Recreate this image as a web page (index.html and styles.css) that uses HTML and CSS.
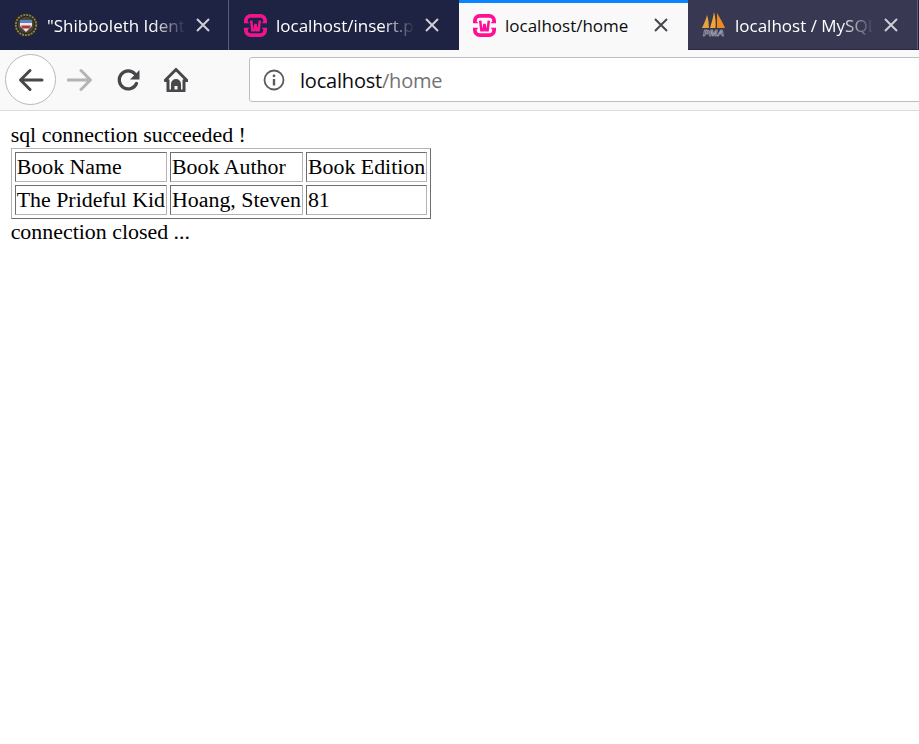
FILE: index.html
```html
<!DOCTYPE html>
<html lang="en">
<head>
<meta charset="utf-8">
<title>localhost/home</title>
<link rel="stylesheet" href="styles.css">
</head>
<body>
<div class="browser">
  <div class="tabs">
    <div class="tab tab-first">
      <svg class="favicon" viewBox="0 0 24 24"><circle cx="12" cy="12" r="12" fill="#2b2a20"/><circle cx="12" cy="12" r="10.200" fill="none" stroke="#8d8455" stroke-width="1.800" stroke-dasharray="2 1"/><circle cx="12" cy="12" r="8" fill="#4a473a"/><path d="M6 7h12v6l-6 6-6-6z" fill="#ece8e4"/><path d="M6 7h12v3H6z" fill="#5a86c0"/><path d="M7 12.500h10l-1.500 3h-7z" fill="#b8323c"/></svg>
      <span class="tab-title">"Shibboleth Identi</span>
      <svg class="close" viewBox="0 0 16 16"><path d="M2 2l12 12M14 2L2 14"/></svg>
    </div>
    <div class="tab tab-second">
      <svg class="favicon favicon-wamp" viewBox="0 0 24 24"><path d="M2 8.500V7a5 5 0 0 1 5-5h10a5 5 0 0 1 5 5v1.500M2 15.500V17a5 5 0 0 0 5 5h10a5 5 0 0 0 5-5v-1.500" fill="none" stroke="#f2148f" stroke-width="4"/><path d="M0 9h5M19 9h5M0 15h5M19 15h5" stroke="#f2148f" stroke-width="1.500"/><path d="M7.500 7l1.200 10h2L12 10.500l1.300 6.500h2L16.500 7" fill="none" stroke="#f2148f" stroke-width="2.600"/></svg>
      <span class="tab-title">localhost/insert.pl</span>
      <svg class="close" viewBox="0 0 16 16"><path d="M2 2l12 12M14 2L2 14"/></svg>
    </div>
    <div class="tab tab-active">
      <svg class="favicon favicon-wamp" viewBox="0 0 24 24"><path d="M2 8.500V7a5 5 0 0 1 5-5h10a5 5 0 0 1 5 5v1.500M2 15.500V17a5 5 0 0 0 5 5h10a5 5 0 0 0 5-5v-1.500" fill="none" stroke="#ff0f97" stroke-width="4"/><path d="M0 9h5M19 9h5M0 15h5M19 15h5" stroke="#ff0f97" stroke-width="1.500"/><path d="M7.500 7l1.200 10h2L12 10.500l1.300 6.500h2L16.500 7" fill="none" stroke="#ff0f97" stroke-width="2.600"/></svg>
      <span class="tab-title">localhost/home</span>
      <svg class="close" viewBox="0 0 16 16"><path d="M2 2l12 12M14 2L2 14"/></svg>
    </div>
    <div class="tab tab-hover">
      <svg class="favicon favicon-pma" viewBox="0 0 25 26"><path d="M1 16C3 12 5 7 6 3c1.500 4 2 9 1.800 13z" fill="#e5a33f"/><path d="M9 16c1.500-5 3-10 4-16 1.500 5 2 11 1.500 16z" fill="#f2a531"/><path d="M16 1c3 5 6 10 8 15h-8z" fill="#ee8a1c"/><text class="pma-text" x="12.500" y="23.500" text-anchor="middle">PMA</text></svg>
      <span class="tab-title">localhost / MySQL</span>
      <svg class="close" viewBox="0 0 16 16"><path d="M2 2l12 12M14 2L2 14"/></svg>
    </div>
  </div>
  <div class="toolbar">
    <div class="back-btn">
      <svg class="nav-icon" viewBox="0 0 26 26"><path d="M24 13H3M12 3.500L2.500 13l9.500 9.500" fill="none" stroke="#47474b" stroke-width="3" stroke-linecap="round" stroke-linejoin="round"/></svg>
    </div>
    <svg class="nav-icon forward" viewBox="0 0 26 26"><path d="M1 13h22M14 3.500l9.500 9.500-9.500 9.500" fill="none" stroke="#b4b4b6" stroke-width="3" stroke-linecap="round" stroke-linejoin="round"/></svg>
    <svg class="nav-icon reload" viewBox="0 0 24 24"><path d="M19.500 15.500A9 9 0 1 1 18 6" fill="none" stroke="#47474b" stroke-width="3.200" stroke-linecap="round"/><path d="M22.500 2v9.500H13z" fill="#47474b"/></svg>
    <svg class="nav-icon home" viewBox="0 0 24 24"><path d="M12 1.500L1 12.500h3V23h16V12.500h3z" fill="none" stroke="#47474b" stroke-width="3" stroke-linejoin="round"/><path d="M7 23v-7a5 5 0 0 1 10 0v7h-3.500v-5h-3v5z" fill="#47474b"/></svg>
    <div class="address">
      <svg class="info" viewBox="0 0 22 22"><circle cx="11" cy="11" r="9.500" fill="none" stroke="#5b5b5f" stroke-width="1.800"/><circle cx="11" cy="6.800" r="1.400" fill="#5b5b5f"/><path d="M11 10v6.500" stroke="#5b5b5f" stroke-width="2.400"/></svg>
      <span class="url"><span class="host">localhost</span><span class="path">/home</span></span>
    </div>
  </div>
  <main class="content">
    <div class="line">sql connection succeeded !</div>
    <table class="books">
      <tr><td>Book Name</td><td>Book Author</td><td>Book Edition</td></tr>
      <tr><td>The Prideful Kid</td><td>Hoang, Steven</td><td>81</td></tr>
    </table>
    <div class="line">connection closed ...</div>
  </main>
</div>
</body>
</html>
```
FILE: styles.css
```css
html, body {
  margin: 0;
  padding: 0;
  background: #fff;
}
.browser {
  width: 919px;
  height: 744px;
  overflow: hidden;
  display: flex;
  flex-direction: column;
}
.tabs {
  height: 50px;
  flex: none;
  display: flex;
  background: #1f2343;
  font-family: "Open Sans", "Noto Sans", sans-serif;
  font-size: 17px;
  color: #fff;
}
.tab {
  box-sizing: border-box;
  height: 50px;
  flex: none;
  display: flex;
  align-items: center;
  padding: 0 19px 0 14px;
  gap: 9px;
}
.tab-first {
  width: 229px;
  padding-right: 17px;
  border-right: 1px solid #5c5e74;
}
.tab-second {
  width: 230px;
  padding-left: 15px;
}
.tab-active {
  width: 229px;
  background: #f9f9fa;
  color: #0c0c0d;
  border-top: 3px solid #0a84ff;
  padding-bottom: 3px;
}
.tab-hover {
  width: 230px;
  background: #383852;
  border-right: 1px solid #5c5e74;
  border-bottom: 1px solid #2a2a42;
  padding-left: 13px;
  padding-right: 18px;
}
.favicon {
  width: 24px;
  height: 24px;
  flex: none;
}
.favicon-wamp {
  width: 23px;
  height: 23px;
}
.favicon-pma {
  width: 25px;
  height: 26px;
}
.pma-text {
  font-family: "Liberation Sans", sans-serif;
  font-size: 9.500px;
  font-weight: 700;
  font-style: italic;
  fill: #39395a;
  stroke: #c4c4d2;
  stroke-width: 0.5px;
}
.tab-title {
  flex: 1;
  min-width: 0;
  white-space: nowrap;
  padding-top: 1px;
  -webkit-mask-image: linear-gradient(to right, #000 76%, transparent 100%);
  mask-image: linear-gradient(to right, #000 76%, transparent 100%);
}
.tab-active .tab-title {
  -webkit-mask-image: none;
  mask-image: none;
}
.close {
  width: 16px;
  height: 16px;
  flex: none;
  fill: none;
  stroke: #cfcfd6;
  stroke-width: 2px;
}
.tab-active .close {
  stroke: #47474b;
}
.toolbar {
  box-sizing: border-box;
  height: 61px;
  flex: none;
  display: flex;
  align-items: center;
  background: #f9f9fa;
  border-bottom: 1px solid #dcdcde;
  padding: 0 0 1px 5px;
}
.back-btn {
  box-sizing: border-box;
  width: 51px;
  height: 51px;
  flex: none;
  border: 1px solid #b9b9bb;
  border-radius: 50%;
  background: #fff;
  display: flex;
  align-items: center;
  justify-content: center;
}
.nav-icon {
  width: 26px;
  height: 26px;
  flex: none;
}
.forward {
  margin-left: 11px;
}
.reload {
  width: 24px;
  height: 24px;
  margin-left: 24px;
}
.home {
  width: 24px;
  height: 24px;
  margin-left: 23px;
}
.address {
  box-sizing: border-box;
  width: 690px;
  height: 45px;
  flex: none;
  margin-left: 61px;
  display: flex;
  align-items: center;
  background: #fff;
  border: 1px solid #bebec0;
  border-radius: 3px;
  padding-left: 13px;
  font-family: "Open Sans", "Noto Sans", sans-serif;
  font-size: 20px;
  letter-spacing: -0.2px;
}
.info {
  width: 22px;
  height: 22px;
  flex: none;
}
.url {
  margin-left: 15px;
  padding-top: 2px;
  white-space: nowrap;
}
.host {
  color: #0c0c0d;
}
.path {
  color: #737373;
}
.content {
  padding: 10.67px;
  font-family: "Liberation Serif", "Times New Roman", serif;
  font-size: 21.9px;
  color: #000;
}
.line {
  line-height: 26px;
}
.books {
  border-style: solid;
  border-width: 1px;
  border-color: #b4b4b4 #6e6e6e #6e6e6e #b4b4b4;
  border-spacing: 3px;
}
.books td {
  border-style: solid;
  border-width: 1px;
  border-color: #6e6e6e #b4b4b4 #b4b4b4 #6e6e6e;
  padding: 1px;
  line-height: 26px;
}
```
